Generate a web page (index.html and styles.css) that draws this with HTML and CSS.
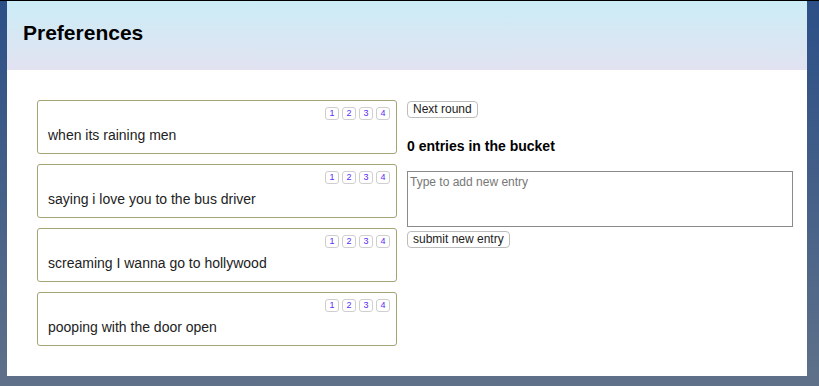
FILE: index.html
```html
<!DOCTYPE html>
<html>
<head>
<meta charset="utf-8">
<title>Preferences</title>
<link rel="stylesheet" href="styles.css">
</head>
<body>
<div class="panel">
  <header class="header"><h1>Preferences</h1></header>
  <main class="content">
    <section class="cards">
      <div class="card">
        <div class="nums"><button class="num">1</button><button class="num">2</button><button class="num">3</button><button class="num">4</button></div>
        <div class="label">when its raining men</div>
      </div>
      <div class="card">
        <div class="nums"><button class="num">1</button><button class="num">2</button><button class="num">3</button><button class="num">4</button></div>
        <div class="label">saying i love you to the bus driver</div>
      </div>
      <div class="card">
        <div class="nums"><button class="num">1</button><button class="num">2</button><button class="num">3</button><button class="num">4</button></div>
        <div class="label">screaming I wanna go to hollywood</div>
      </div>
      <div class="card">
        <div class="nums"><button class="num">1</button><button class="num">2</button><button class="num">3</button><button class="num">4</button></div>
        <div class="label">pooping with the door open</div>
      </div>
    </section>
    <section class="side">
      <button class="btn next">Next round</button>
      <div class="count">0 entries in the bucket</div>
      <textarea class="entry" placeholder="Type to add new entry"></textarea>
      <button class="btn submit">submit new entry</button>
    </section>
  </main>
</div>
</body>
</html>
```
FILE: styles.css
```css
html, body {
  margin: 0;
  padding: 0;
  height: 100%;
}
body {
  background: linear-gradient(to bottom, #2b4f87 0%, #5f7189 100%);
  border-top: 1px solid #000;
  box-sizing: border-box;
  font-family: "Liberation Sans", Arial, sans-serif;
  color: #222;
}
.panel {
  width: 800px;
  margin-left: 7px;
  height: 375px;
  background: #fff;
}
.header {
  height: 69px;
  background: linear-gradient(to bottom, #cbedf6 0%, #e2e2f1 100%);
  box-sizing: border-box;
  padding: 19px 0 0 16px;
}
.header h1 {
  margin: 0;
  font-size: 21px;
  line-height: 25px;
  font-weight: bold;
  color: #000;
}
.content {
  display: flex;
  padding: 30px 14px 0 30px;
  gap: 10px;
}
.cards {
  display: flex;
  flex-direction: column;
  gap: 10px;
  width: 360px;
}
.card {
  display: flex;
  flex-direction: column;
  border: 1px solid #a3a577;
  border-radius: 3px;
  padding: 6px 6px 8px 10px;
  height: 54px;
  box-sizing: border-box;
}
.nums {
  align-self: flex-end;
  display: flex;
  gap: 3px;
}
.num {
  width: 14px;
  height: 13px;
  padding: 0;
  border: 1px solid #cfcfcf;
  border-radius: 3px;
  background: #fff;
  color: #5a2ef5;
  font-family: "Liberation Sans", Arial, sans-serif;
  font-size: 9px;
  line-height: 11px;
  text-align: center;
}
.label {
  margin-top: 7px;
  font-size: 14px;
  line-height: 17px;
  color: #222;
}
.side {
  flex: 1;
  display: flex;
  flex-direction: column;
  align-items: flex-start;
}
.btn {
  background: #fff;
  border: 1px solid #bdbdbd;
  border-radius: 4px;
  font-family: "Liberation Sans", Arial, sans-serif;
  font-size: 12px;
  line-height: 15px;
  color: #222;
  padding: 0 5px;
  height: 17px;
}
.next {
  margin-top: 1px;
}
.count {
  margin-top: 20px;
  font-size: 14px;
  font-weight: bold;
  line-height: 17px;
  color: #000;
}
.entry {
  margin-top: 16px;
  width: 386px;
  height: 56px;
  box-sizing: border-box;
  border: 1px solid #8a8a8a;
  padding: 3px 2px;
  resize: none;
  font-family: "Liberation Sans", Arial, sans-serif;
  font-size: 12px;
}
.entry::placeholder {
  color: #777;
}
.submit {
  margin-top: 4px;
}
```
